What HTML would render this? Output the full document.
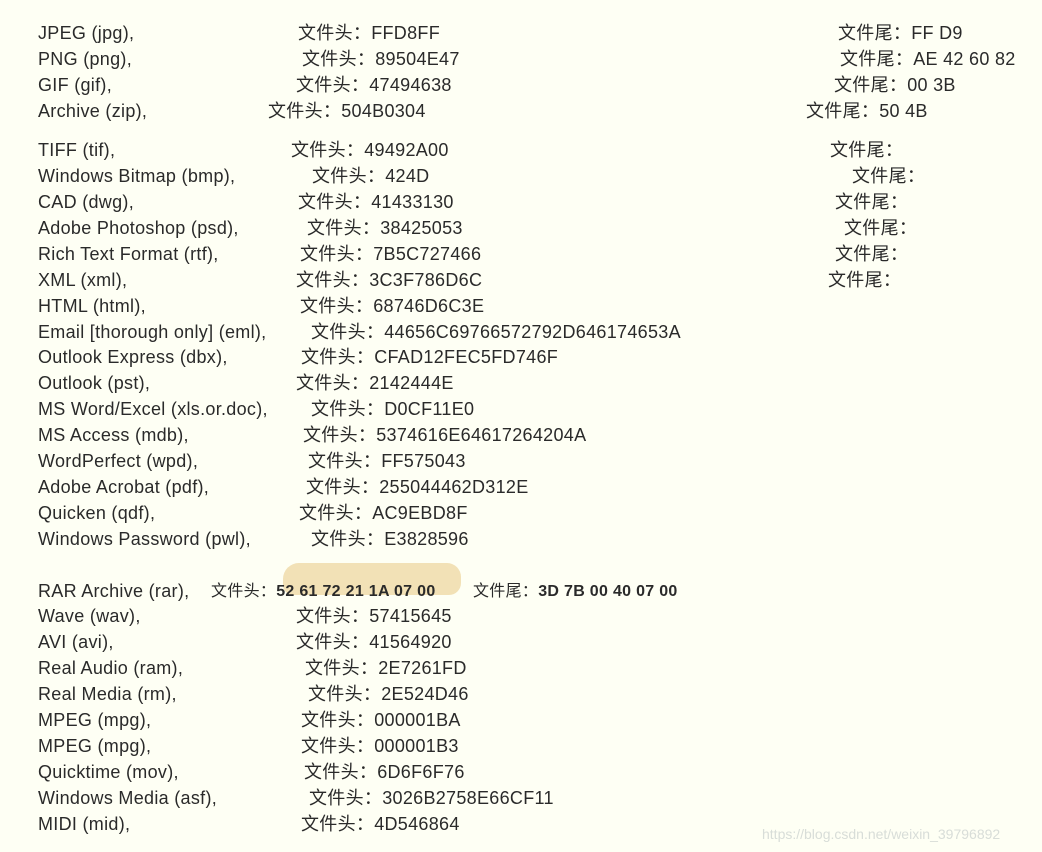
<!DOCTYPE html>
<html><head><meta charset="utf-8"><style>
html,body{margin:0;padding:0;background:#fefff4;width:1042px;height:852px;overflow:hidden;position:relative}
div{position:absolute;font-family:"Liberation Sans","Noto Sans CJK SC",sans-serif;font-size:18px;letter-spacing:0.3px;color:#2a2a2a;white-space:nowrap;line-height:22px}
.w{color:#d8ddd8;font-size:14px;letter-spacing:0}
.hl{position:absolute;left:283px;top:563px;width:178px;height:32px;background:#f0dcaa;border-radius:16px 14px 12px 10px;opacity:.85}
</style></head><body>
<span class="hl"></span>
<div style="left:38px;top:22px">JPEG (jpg),</div><div style="left:298px;top:22px">文件头：FFD8FF</div><div style="left:838px;top:22px">文件尾：FF D9</div>
<div style="left:38px;top:48px">PNG (png),</div><div style="left:302px;top:48px">文件头：89504E47</div><div style="left:840px;top:48px">文件尾：AE 42 60 82</div>
<div style="left:38px;top:74px">GIF (gif),</div><div style="left:296px;top:74px">文件头：47494638</div><div style="left:834px;top:74px">文件尾：00 3B</div>
<div style="left:38px;top:100px">Archive (zip),</div><div style="left:268px;top:100px">文件头：504B0304</div><div style="left:806px;top:100px">文件尾：50 4B</div>
<div style="left:38px;top:139px">TIFF (tif),</div><div style="left:291px;top:139px">文件头：49492A00</div><div style="left:830px;top:139px">文件尾：</div>
<div style="left:38px;top:165px">Windows Bitmap (bmp),</div><div style="left:312px;top:165px">文件头：424D</div><div style="left:852px;top:165px">文件尾：</div>
<div style="left:38px;top:191px">CAD (dwg),</div><div style="left:298px;top:191px">文件头：41433130</div><div style="left:835px;top:191px">文件尾：</div>
<div style="left:38px;top:217px">Adobe Photoshop (psd),</div><div style="left:307px;top:217px">文件头：38425053</div><div style="left:844px;top:217px">文件尾：</div>
<div style="left:38px;top:243px">Rich Text Format (rtf),</div><div style="left:300px;top:243px">文件头：7B5C727466</div><div style="left:835px;top:243px">文件尾：</div>
<div style="left:38px;top:269px">XML (xml),</div><div style="left:296px;top:269px">文件头：3C3F786D6C</div><div style="left:828px;top:269px">文件尾：</div>
<div style="left:38px;top:295px">HTML (html),</div><div style="left:300px;top:295px">文件头：68746D6C3E</div>
<div style="left:38px;top:321px">Email [thorough only] (eml),</div><div style="left:311px;top:321px">文件头：44656C69766572792D646174653A</div>
<div style="left:38px;top:346px">Outlook Express (dbx),</div><div style="left:301px;top:346px">文件头：CFAD12FEC5FD746F</div>
<div style="left:38px;top:372px">Outlook (pst),</div><div style="left:296px;top:372px">文件头：2142444E</div>
<div style="left:38px;top:398px">MS Word/Excel (xls.or.doc),</div><div style="left:311px;top:398px">文件头：D0CF11E0</div>
<div style="left:38px;top:424px">MS Access (mdb),</div><div style="left:303px;top:424px">文件头：5374616E64617264204A</div>
<div style="left:38px;top:450px">WordPerfect (wpd),</div><div style="left:308px;top:450px">文件头：FF575043</div>
<div style="left:38px;top:476px">Adobe Acrobat (pdf),</div><div style="left:306px;top:476px">文件头：255044462D312E</div>
<div style="left:38px;top:502px">Quicken (qdf),</div><div style="left:299px;top:502px">文件头：AC9EBD8F</div>
<div style="left:38px;top:528px">Windows Password (pwl),</div><div style="left:311px;top:528px">文件头：E3828596</div>
<div style="left:38px;top:580px">RAR Archive (rar),</div><div style="left:211px;top:581px;font-size:16px">文件头：<b style="font-weight:600">52 61 72 21 1A 07 00</b></div><div style="left:473px;top:581px;font-size:16px">文件尾：<b style="font-weight:600">3D 7B 00 40 07 00</b></div>
<div style="left:38px;top:605px">Wave (wav),</div><div style="left:296px;top:605px">文件头：57415645</div>
<div style="left:38px;top:631px">AVI (avi),</div><div style="left:296px;top:631px">文件头：41564920</div>
<div style="left:38px;top:657px">Real Audio (ram),</div><div style="left:305px;top:657px">文件头：2E7261FD</div>
<div style="left:38px;top:683px">Real Media (rm),</div><div style="left:308px;top:683px">文件头：2E524D46</div>
<div style="left:38px;top:709px">MPEG (mpg),</div><div style="left:301px;top:709px">文件头：000001BA</div>
<div style="left:38px;top:735px">MPEG (mpg),</div><div style="left:301px;top:735px">文件头：000001B3</div>
<div style="left:38px;top:761px">Quicktime (mov),</div><div style="left:304px;top:761px">文件头：6D6F6F76</div>
<div style="left:38px;top:787px">Windows Media (asf),</div><div style="left:309px;top:787px">文件头：3026B2758E66CF11</div>
<div style="left:38px;top:813px">MIDI (mid),</div><div style="left:301px;top:813px">文件头：4D546864</div>
<div class="w" style="left:762px;top:823px">https://blog.csdn.net/weixin_39796892</div>
</body></html>
